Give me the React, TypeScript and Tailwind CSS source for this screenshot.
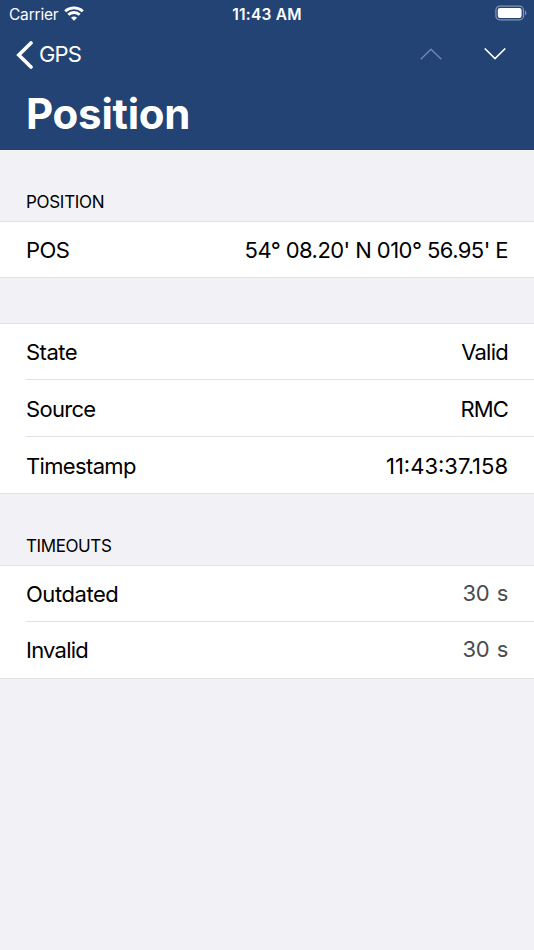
import React from "react";

type RowProps = {
  label: string;
  value: string;
  labelClass?: string;
  valueClass?: string;
  className: string;
  last?: boolean;
};

function Row({ label, value, labelClass = "", valueClass = "", className, last }: RowProps) {
  return (
    <div className={`bg-white ${last ? "" : "pl-[26px]"} ${className}`}>
      <div
        className={`flex h-full items-center justify-between border-b border-[#e2e2e4] pr-[26px] ${
          last ? "pl-[26px]" : ""
        }`}
      >
        <span className={`text-[22px] leading-7 whitespace-nowrap ${labelClass}`}>{label}</span>
        <span className={`text-[22px] leading-7 whitespace-nowrap ${valueClass}`}>{value}</span>
      </div>
    </div>
  );
}

function StatusBar() {
  return (
    <div className="flex h-7 items-center justify-between pr-[7px] pl-[9px]">
      <div className="flex w-[100px] items-center gap-[6px]">
        <span className="pt-px text-[15.5px] leading-5 tracking-[-0.2px]">Carrier</span>
        <svg width="20" height="15" viewBox="0 0 20 15" className="mb-[2px]" fill="none" stroke="white" strokeWidth="2.9">
          <path d="M1.2 5.2C6.1 0.7 13.9 0.7 18.8 5.2" />
          <path d="M4.3 8.8C7.5 5.8 12.5 5.8 15.7 8.8" />
          <path d="M10 14.8L7 11.8C8.7 10.2 11.3 10.2 13 11.8Z" fill="white" stroke="none" />
        </svg>
      </div>
      <span className="pt-px pr-[2px] text-[15.5px] leading-5 font-semibold tracking-[0.2px]">11:43 AM</span>
      <div className="flex w-[100px] justify-end">
        <svg width="32" height="16" viewBox="0 0 32 16" className="mb-[2px]">
          <rect x="0.9" y="1.2" width="27.6" height="13.6" rx="3.8" fill="none" stroke="#8296b5" strokeWidth="1.2" />
          <rect x="2.8" y="3.1" width="23.8" height="9.8" rx="2.2" fill="white" />
          <path d="M30 5.6C31.9 6.3 31.9 9.7 30 10.4Z" fill="#8296b5" />
        </svg>
      </div>
    </div>
  );
}

export default function App() {
  return (
    <div className="min-h-[950px] w-full bg-[#f2f1f6] font-['Inter','Liberation_Sans',sans-serif] text-black">
      {/* Header */}
      <header className="h-[150px] bg-[#234375] text-white">
        <StatusBar />
        <div className="flex h-[54px] items-center justify-between pr-[28px] pl-4">
          <div className="flex items-center gap-[6px]">
            <svg width="17" height="28" viewBox="0 0 17 28" fill="none" stroke="white" strokeWidth="3.6" strokeLinecap="round">
              <path d="M15 2L2.8 14L15 26" />
            </svg>
            <span className="pb-[2px] text-[22px] leading-7 tracking-[-0.8px]">GPS</span>
          </div>
          <div className="flex gap-[42px] pb-[2px]">
            <svg width="22" height="12" viewBox="0 0 22 12" fill="none" stroke="#7088ac" strokeWidth="1.4">
              <path d="M0.7 11.3L11 1.2L21.3 11.3" />
            </svg>
            <svg width="22" height="12" viewBox="0 0 22 12" fill="none" stroke="white" strokeWidth="1.5">
              <path d="M0.7 0.4L11 10.6L21.3 0.4" />
            </svg>
          </div>
        </div>
        <h1 className="pt-1 pl-[26px] text-[42px] leading-[56px] font-bold tracking-[-0.25px]">Position</h1>
      </header>

      {/* Position */}
      <h2 className="flex h-[71px] items-end pb-[9px] pl-[26px] text-[17px] leading-5 tracking-[-0.3px]">POSITION</h2>
      <section className="border-t border-[#e2e2e4]">
        <Row
          label="POS"
          value="54° 08.20' N 010° 56.95' E"
          labelClass="tracking-[-0.6px]"
          valueClass="tracking-[-0.56px]"
          className="h-[56px]"
          last
        />
      </section>

      {/* State */}
      <section className="mt-[45px] border-t border-[#e2e2e4]">
        <Row
          label="State"
          value="Valid"
          labelClass="tracking-[-0.5px]"
          valueClass="tracking-[-0.75px]"
          className="h-[56px]"
        />
        <Row
          label="Source"
          value="RMC"
          labelClass="pt-px tracking-[-0.7px]"
          valueClass="pt-px tracking-[-0.9px]"
          className="h-[57px]"
        />
        <Row
          label="Timestamp"
          value="11:43:37.158"
          labelClass="pt-px tracking-[-0.65px]"
          valueClass="pt-px"
          className="h-[57px]"
          last
        />
      </section>

      {/* Timeouts */}
      <h2 className="flex h-[71px] items-end pb-[9px] pl-[26px] text-[17px] leading-5 tracking-[-0.4px]">TIMEOUTS</h2>
      <section className="border-t border-[#e2e2e4]">
        <Row
          label="Outdated"
          value="30 s"
          labelClass="tracking-[-0.45px]"
          valueClass="pb-[2px] tracking-[-0.3px] text-[#4c4c4c] [word-spacing:1.5px]"
          className="h-[56px]"
        />
        <Row
          label="Invalid"
          value="30 s"
          labelClass="tracking-[-0.75px]"
          valueClass="pb-[2px] tracking-[-0.3px] text-[#4c4c4c] [word-spacing:1.5px]"
          className="h-[57px]"
          last
        />
      </section>
    </div>
  );
}
